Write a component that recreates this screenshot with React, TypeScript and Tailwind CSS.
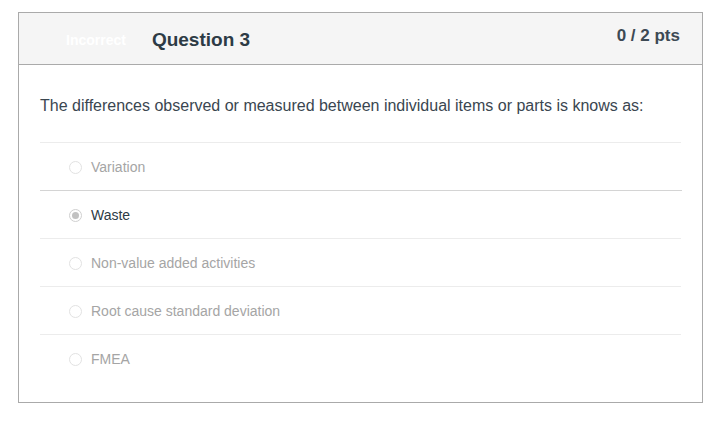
import React from "react";

const answers = [
  { label: "Variation", selected: false },
  { label: "Waste", selected: true },
  { label: "Non-value added activities", selected: false },
  { label: "Root cause standard deviation", selected: false },
  { label: "FMEA", selected: false },
];

export default function App() {
  return (
    <div className="min-h-[423px] w-[722px] bg-white pt-[12px] pl-[18px]" style={{ fontFamily: '"Liberation Sans", Arial, sans-serif' }}>
      <div className="w-[685px] border border-[#aaaaaa] bg-white">
        <div className="flex h-[52px] items-start border-b border-[#aaaaaa] bg-[#f5f5f5]">
          <div className="flex h-full items-center pl-[47px] pt-[4px]">
            <span className="text-[14px] font-bold text-white">Incorrect</span>
            <span className="ml-[26px] text-[19px] font-bold text-[#2d3b45]">Question 3</span>
          </div>
          <div className="ml-auto pt-[13px] pr-[22px] text-[17px] font-bold leading-[20px] text-[#3d4a54]">0 / 2 pts</div>
        </div>
        <div className="px-[21px] pt-[29px] pb-[20px]">
          <p className="text-[16px] leading-[24px] text-[#3a4650]">
            The differences observed or measured between individual items or parts is knows as:
          </p>
          <div className="mt-[24px]">
            {answers.map((a) => (
              <div
                key={a.label}
                className={
                  "flex h-[48px] items-center border-t pt-[2px] pl-[29px] " +
                  (a.selected ? "border-[#d4d4d4] -mr-[1px]" : "border-[#ececec]")
                }
              >
                {a.selected ? (
                  <span className="flex h-[13px] w-[13px] items-center justify-center rounded-full border border-[#d0d0d0] bg-white">
                    <span className="h-[7px] w-[7px] rounded-full bg-[#c2c2c2]" />
                  </span>
                ) : (
                  <span className="h-[13px] w-[13px] rounded-full border border-[#e2e2e2] bg-white" />
                )}
                <span className={"ml-[9px] text-[14px] " + (a.selected ? "text-[#2d3b45]" : "text-[#a5a5a5]")}>
                  {a.label}
                </span>
              </div>
            ))}
          </div>
        </div>
      </div>
    </div>
  );
}
